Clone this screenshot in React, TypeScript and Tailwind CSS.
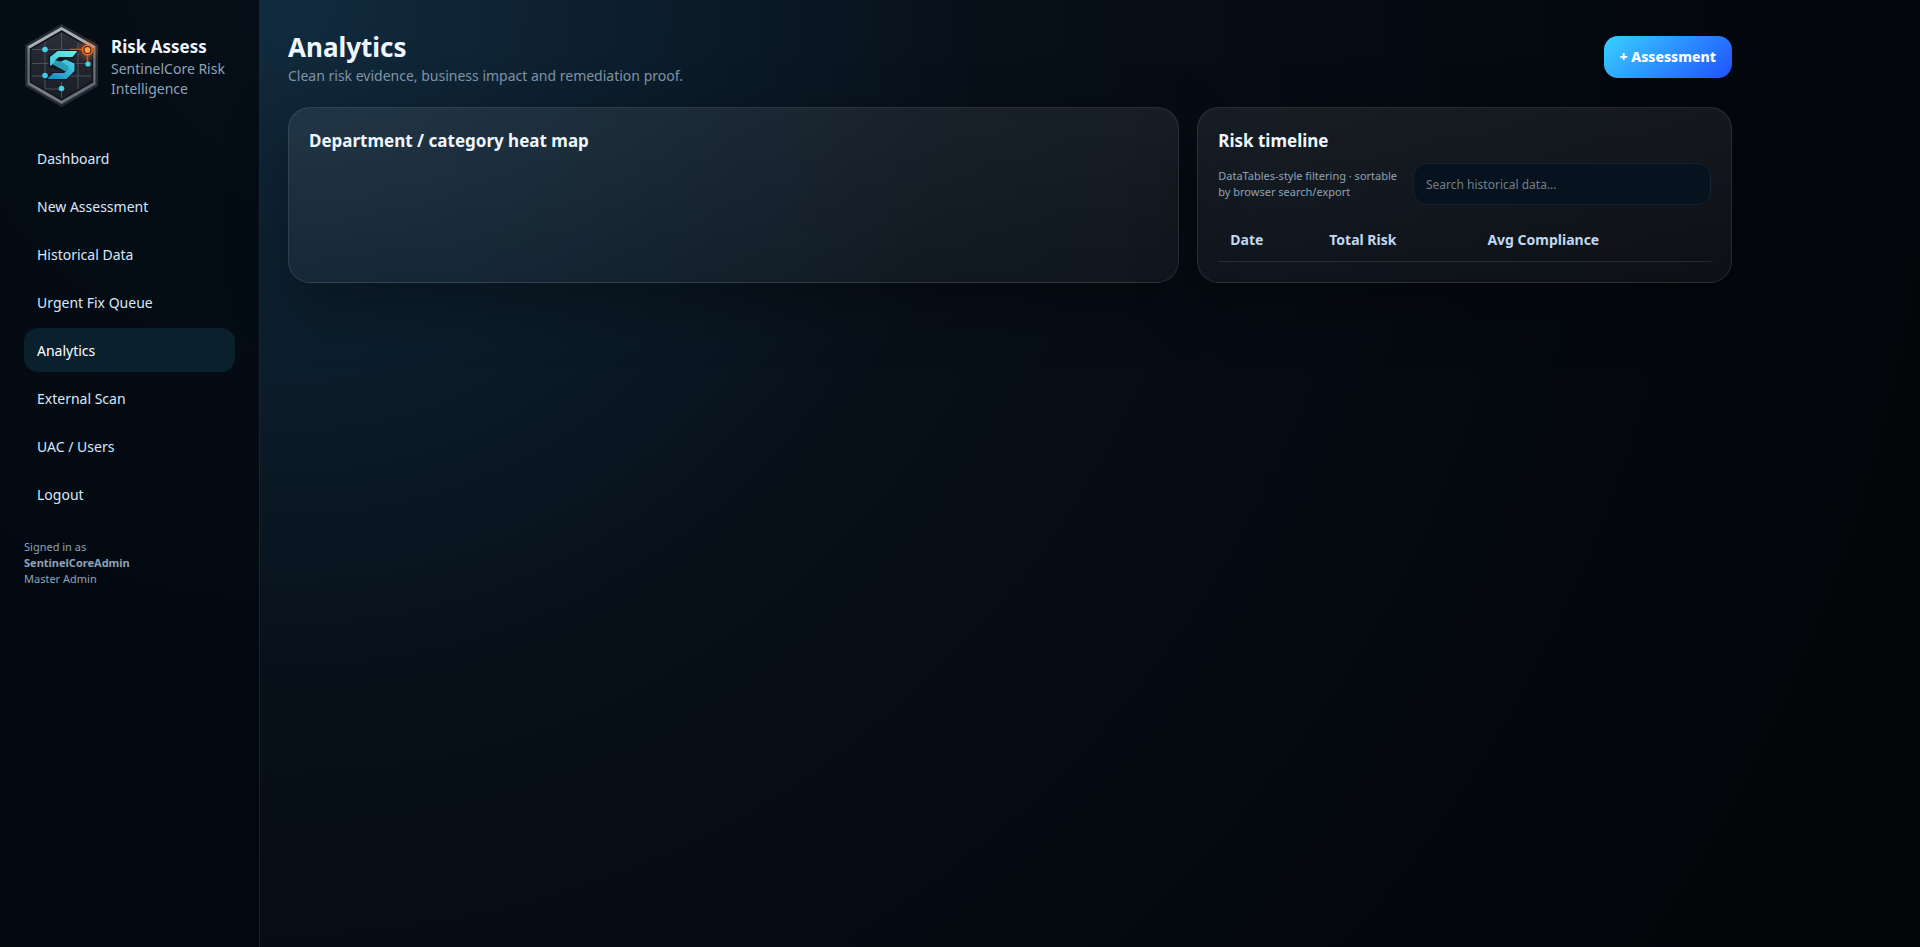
import React from 'react'

type NavItem = {
  label: string,
  active?: boolean
}

const navItems: NavItem[] = [
  { label: 'Dashboard' },
  { label: 'New Assessment' },
  { label: 'Historical Data' },
  { label: 'Urgent Fix Queue' },
  { label: 'Analytics', active: true },
  { label: 'External Scan' },
  { label: 'UAC / Users' },
  { label: 'Logout' },
]

const columns = ['Date', 'Total Risk', 'Avg Compliance']

function Logo() {
  return (
    <svg viewBox="0 0 75 84" className="h-[84px] w-[75px] shrink-0" aria-hidden="true">
      <defs>
        <linearGradient id="rim" x1="0" y1="0" x2="1" y2="1">
          <stop offset="0" stopColor="#8d949e" />
          <stop offset="0.3" stopColor="#5f6772" />
          <stop offset="0.55" stopColor="#7b838e" />
          <stop offset="1" stopColor="#59616d" />
        </linearGradient>
        <linearGradient id="plate" x1="0" y1="0" x2="0" y2="1">
          <stop offset="0" stopColor="#2a2f38" />
          <stop offset="1" stopColor="#191d25" />
        </linearGradient>
        <linearGradient id="sTop" x1="0" y1="1" x2="1" y2="0">
          <stop offset="0" stopColor="#3cc4d6" />
          <stop offset="1" stopColor="#6ff0e6" />
        </linearGradient>
        <linearGradient id="sBottom" x1="0" y1="1" x2="1" y2="0">
          <stop offset="0" stopColor="#1680c4" />
          <stop offset="1" stopColor="#4fdbe4" />
        </linearGradient>
        <radialGradient id="alert">
          <stop offset="0" stopColor="#ff6a1f" stopOpacity="0.6" />
          <stop offset="1" stopColor="#ff6a1f" stopOpacity="0" />
        </radialGradient>
      </defs>
      <path d="M37.500 0 74 21V62L37.500 83 1 62V21Z" fill="#252b34" />
      <path d="M37.500 3 71.500 22.500V60.500L37.500 80 3.500 60.500V22.500Z" fill="url(#rim)" />
      <path d="M37.500 3 71.500 22.500 68.500 24.500 37.500 7 6.500 24.500 3.500 22.500Z" fill="#a9b0b9" />
      <path d="M37.500 7 68.500 25V58L37.500 76 6.500 58V25Z" fill="url(#plate)" stroke="#11151c" strokeWidth="1.500" />
      <path d="M37.500 9V26M37.500 58V74M21 18V65H37M54 18V65M8 25.500H46M8 39.500H26M50 39.500H67M8 52H22M44 52H67" stroke="#4b515b" strokeWidth="1" fill="none" />
      <circle cx="63.500" cy="26" r="12" fill="url(#alert)" />
      <path d="M46 25.500H59M63.500 31V40" stroke="#d3561f" strokeWidth="1.500" />
      <path d="M33 27H53.500L48.500 33.500H36L41 35.500 50.500 39.500V47L42.500 55H23L29 49H39.500L41 47 25.500 42V33Z" fill="#10161e" stroke="#10161e" strokeWidth="2" />
      <path d="M33.500 27H53.500L48.500 33H35L31.500 36V38.500L26 42V33Z" fill="url(#sTop)" />
      <path d="M37 37.500 41.500 35.500 50.500 39.500V47L42.500 55H23L29.500 49H40L44 45.500Z" fill="url(#sBottom)" />
      <path d="M31.500 36.500 37 37.500 44.500 42.500V45.500L41.500 47.500 29 40.500Z" fill="#2a9db4" />
      <circle cx="21" cy="25.500" r="2.800" fill="#46d2e6" />
      <circle cx="21" cy="51.500" r="2.800" fill="#46c4e6" />
      <circle cx="37.500" cy="64.500" r="2.800" fill="#46d2e6" />
      <circle cx="64" cy="40" r="2.600" fill="#46d2e6" />
      <circle cx="63.500" cy="26" r="4.800" fill="#3a1d16" stroke="#f0702c" strokeWidth="1.500" />
      <circle cx="63.500" cy="26" r="3" fill="#ffa04d" />
    </svg>
  )
}

function Card({ title, children }: { title: string, children?: React.ReactNode }) {
  return (
    <section className="rounded-[22px] border border-white/10 bg-linear-to-b from-white/7 to-white/4 p-5 shadow-[0_20px_60px_rgba(0,0,0,0.35)]">
      <h3 className="text-[17px] leading-[26px] font-bold">{title}</h3>
      {children}
    </section>
  )
}

export default function App() {
  return (
    <div className="grid min-h-screen grid-cols-[260px_1fr] bg-[radial-gradient(circle_at_15%_0%,#112b3e_0%,#070f18_38%,#03060a_85%,#020406_100%)] font-['Noto_Sans',sans-serif] text-[14px] leading-5 text-[#eef7ff]">
      <aside className="border-r border-white/10 bg-[#02070f]/80 p-6">
        <div className="mb-7 flex items-center gap-3">
          <Logo />
          <div className="pt-0.5">
            <div className="text-[17px] leading-6 font-bold">Risk Assess</div>
            <div className="text-[#8fa3b8]">SentinelCore Risk Intelligence</div>
          </div>
        </div>
        <nav className="flex flex-col gap-1">
          {navItems.map((item) => (
            <a
              key={item.label}
              href="#"
              className={
                item.active
                  ? 'rounded-[14px] bg-[#0a212d] px-[13px] pt-[13px] pb-[11px] text-white'
                  : 'rounded-[14px] px-[13px] pt-[13px] pb-[11px] text-[#d8e8f8]'
              }
            >
              {item.label}
            </a>
          ))}
        </nav>
        <div className="mt-[23px] text-[11px] leading-4 text-[#8fa3b8]">
          Signed in as
          <br />
          <b>SentinelCoreAdmin</b>
          <br />
          Master Admin
        </div>
      </aside>

      <main className="w-full max-w-[1500px] p-7">
        <header className="mb-[21px] flex items-center justify-between">
          <div>
            <h1 className="text-[26px] leading-[38px] font-bold">Analytics</h1>
            <p className="text-[#8195a8]">Clean risk evidence, business impact and remediation proof.</p>
          </div>
          <button className="h-[42px] rounded-[14px] bg-[linear-gradient(135deg,#38d0ff,#2152ff)] px-4 font-extrabold text-white">
            + Assessment
          </button>
        </header>

        <div className="grid grid-cols-[5fr_3fr] gap-[18px]">
          <Card title="Department / category heat map" />
          <Card title="Risk timeline">
            <div className="mt-[9px] mb-3 flex items-center gap-3">
              <label htmlFor="history-search" className="flex-1 text-[11px] leading-4 text-[#8fa3b8]">
                DataTables-style filtering · sortable by browser search/export
              </label>
              <input
                id="history-search"
                type="text"
                placeholder="Search historical data..."
                className="h-[42px] w-[298px] rounded-[14px] border border-[#142331] bg-[#06121d] px-3 text-[12px] placeholder:text-[#757f89]"
              />
            </div>
            <table className="w-full text-left">
              <thead>
                <tr className="border-b border-white/10 text-[#c0d8f0]">
                  {columns.map((column) => (
                    <th key={column} className="px-3 pt-[13px] pb-[11px] font-bold">{column}</th>
                  ))}
                </tr>
              </thead>
            </table>
          </Card>
        </div>
      </main>
    </div>
  )
}
